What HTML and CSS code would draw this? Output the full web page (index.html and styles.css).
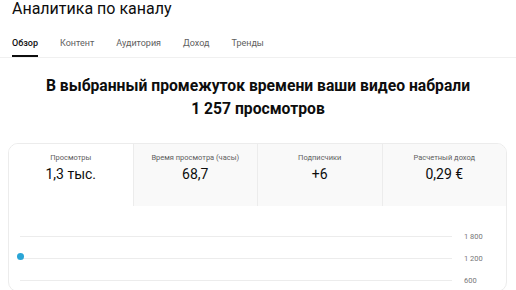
FILE: index.html
```html
<!DOCTYPE html>
<html lang="ru">
<head>
    <meta charset="UTF-8">
    <title>Аналитика по каналу</title>
    <link rel="stylesheet" href="styles.css">
</head>
<body>
    <div class="page-title">Аналитика по каналу</div>
    <div class="tabs">
        <div class="tab active">Обзор</div>
        <div class="tab">Контент</div>
        <div class="tab">Аудитория</div>
        <div class="tab">Доход</div>
        <div class="tab">Тренды</div>
    </div>
    <h1 class="headline">В выбранный промежуток времени ваши видео набрали<br>1 257 просмотров</h1>
    <div class="card">
        <div class="metrics">
            <div class="metric selected">
                <div class="metric-label">Просмотры</div>
                <div class="metric-value">1,3 тыс.</div>
            </div>
            <div class="metric">
                <div class="metric-label">Время просмотра (часы)</div>
                <div class="metric-value">68,7</div>
            </div>
            <div class="metric">
                <div class="metric-label">Подписчики</div>
                <div class="metric-value">+6</div>
            </div>
            <div class="metric">
                <div class="metric-label">Расчетный доход</div>
                <div class="metric-value">0,29 €</div>
            </div>
        </div>
        <div class="chart">
            <div class="chart-row">
                <div class="grid-line"></div>
                <div class="axis-label">1 800</div>
            </div>
            <div class="chart-row">
                <div class="grid-line"><span class="dot"></span></div>
                <div class="axis-label">1 200</div>
            </div>
            <div class="chart-row">
                <div class="grid-line"></div>
                <div class="axis-label">600</div>
            </div>
        </div>
    </div>
</body>
</html>
```

FILE: styles.css
```css
body {
    margin: 0;
    padding: 0;
    font-family: Roboto, "Liberation Sans", sans-serif;
    color: #0d0d0d;
    background-color: #fff;
    overflow: hidden;
}
.page-title {
    font-size: 16px;
    padding-left: 12px;
    line-height: 17px;
    color: #0d0d0d;
}
.tabs {
    display: flex;
    gap: 22px;
    padding: 21px 12px 0;
    border-bottom: 1px solid #f0f0f0;
}
.tab {
    font-size: 9px;
    line-height: 11px;
    color: #606060;
    padding: 0 0 6px;
    border-bottom: 2px solid transparent;
}
.tab.active {
    color: #0d0d0d;
    font-weight: 500;
    border-bottom-color: #0d0d0d;
}
.headline {
    text-align: center;
    font-size: 15.7px;
    font-weight: 700;
    line-height: 23px;
    margin: 16px 0 0;
    color: #0d0d0d;
}
.card {
    margin: 23px 9px 0 8px;
    border: 1px solid #ececec;
    border-radius: 10px;
    overflow: hidden;
}
.metrics {
    display: flex;
    height: 62px;
}
.metric {
    flex: 1;
    text-align: center;
    background-color: #f9f9f9;
    border-left: 1px solid #ececec;
    padding-top: 9px;
}
.metric:first-child {
    border-left: none;
}
.metric.selected {
    background-color: #fff;
}
.metric-label {
    font-size: 7.5px;
    color: #606060;
    line-height: 10px;
}
.metric-value {
    font-size: 14px;
    line-height: 18px;
    margin-top: 2px;
}
.chart {
    padding: 19px 0 0 11px;
}
.chart-row {
    display: flex;
    align-items: center;
    height: 22px;
}
.grid-line {
    flex: 1;
    height: 1px;
    background-color: #ececec;
    position: relative;
}
.dot {
    position: absolute;
    left: -3px;
    top: -5px;
    width: 7px;
    height: 7px;
    border-radius: 50%;
    background-color: #2aa5d6;
}
.axis-label {
    width: 42px;
    padding-left: 12px;
    font-size: 7.5px;
    color: #777;
}
```
